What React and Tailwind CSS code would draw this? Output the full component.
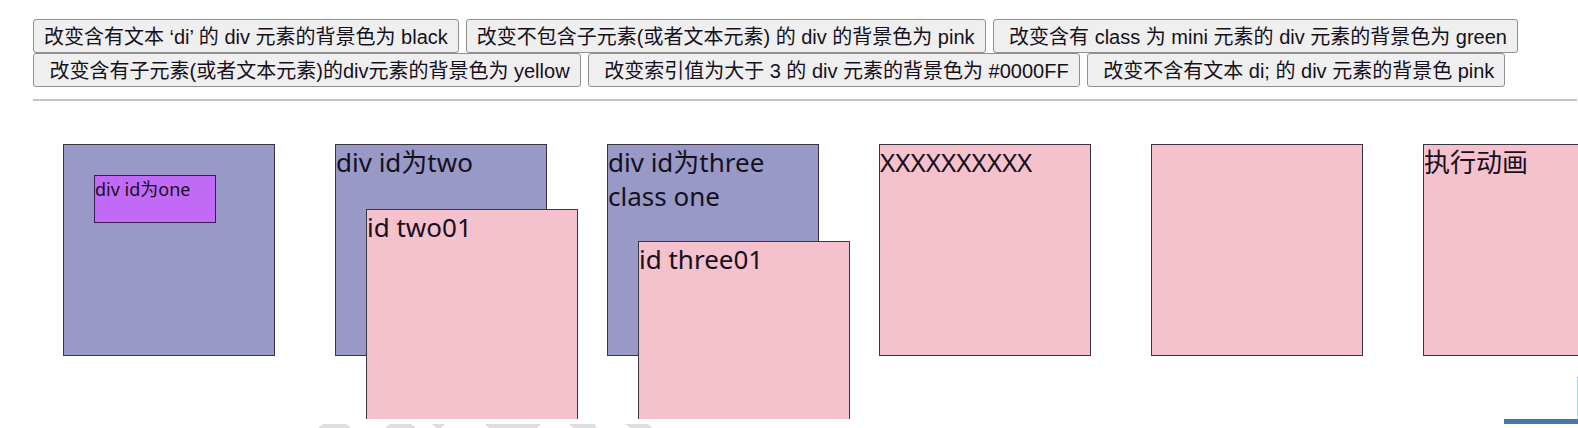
const buttons = [
  [
    "改变含有文本 ‘di’ 的 div 元素的背景色为 black",
    "改变不包含子元素(或者文本元素) 的 div 的背景色为 pink",
    "\u00a0改变含有 class 为 mini 元素的 div 元素的背景色为 green",
  ],
  [
    "\u00a0改变含有子元素(或者文本元素)的div元素的背景色为 yellow",
    "\u00a0改变索引值为大于 3 的 div 元素的背景色为 #0000FF",
    "\u00a0改变不含有文本 di; 的 div 元素的背景色 pink",
  ],
];

function Box({ tone, children }) {
  return (
    <div className={`size-[212px] shrink-0 border border-[#3a3440] ${tone}`}>
      {children}
    </div>
  );
}

const violet = "bg-[#9999c8]";
const pink = "bg-[#f5c1cd]";

export default function App() {
  return (
    <div className="flex min-h-screen flex-col overflow-hidden bg-white font-['Noto_Sans','Noto_Sans_CJK_SC',sans-serif] text-[26px] leading-[34px] text-[#15101c]">
      <main className="grow basis-0 overflow-hidden pl-[33px] pt-[19px]">
        {buttons.map((row, i) => (
          <div key={i} className="flex gap-[7px]">
            {row.map((label) => (
              <button
                key={label}
                type="button"
                className="h-[34px] shrink-0 whitespace-nowrap rounded-[3px] border border-[#8f8f8f] bg-[#efefef] px-[10px] pt-px font-['Liberation_Sans','Noto_Sans_CJK_SC',sans-serif] text-[20px] leading-[32px]"
              >
                {label}
              </button>
            ))}
          </div>
        ))}
        <hr className="mr-px mt-[12px] border-t-2 border-[#c4c4c4]" />
        <div className="flex h-[317px] gap-[60px] pl-[30px] pt-[43px]">
          <Box tone={violet}>
            <div className="ml-[30px] mt-[30px] h-[48px] w-[122px] border border-[#3a1a50] bg-[#c16af5] text-[18px] leading-[26px]">
              div id为one
            </div>
          </Box>
          <Box tone={violet}>
            <p>div id为two</p>
            <div className="ml-[30px] mt-[30px]">
              <Box tone={pink}>id two01</Box>
            </div>
          </Box>
          <Box tone={violet}>
            <p>div id为three</p>
            <p>class one</p>
            <div className="ml-[30px] mt-[28px]">
              <Box tone={pink}>id three01</Box>
            </div>
          </Box>
          <Box tone={pink}>XXXXXXXXXX</Box>
          <Box tone={pink} />
          <Box tone={pink}>执行动画</Box>
        </div>
      </main>
      <footer className="relative flex h-[9px] items-start justify-between bg-white pl-[310px]">
        <svg className="mt-[5px]" width="360" height="4" fill="#dedede" aria-hidden="true">
          <path d="M13 0H36L41 4H8zM80 0H101L106 4H75zM122 0H135L131 4H126zM175 0H231L227 4H179zM259 0H284L287 4H263zM315 0H338L342 4H321z" />
        </svg>
        <div className="h-[5px] w-[74px] bg-[#4779a8]" />
        <div className="absolute bottom-full right-0 h-[42px] w-px bg-[#9be0ee]" />
      </footer>
    </div>
  );
}
